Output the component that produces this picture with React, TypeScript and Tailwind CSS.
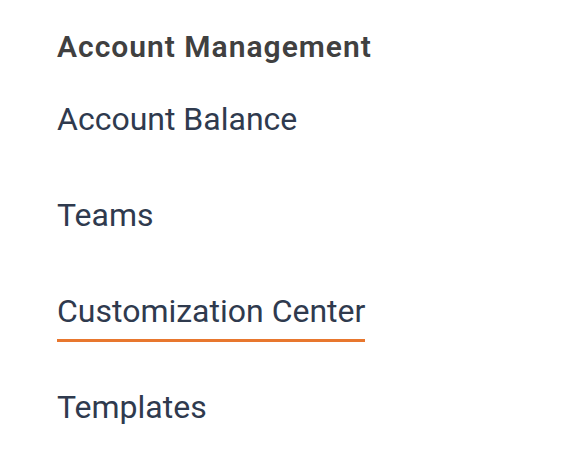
import React from "react";

export default function App() {
  const items = ["Account Balance", "Teams", "Customization Center", "Templates"];
  return (
    <div className="w-[586px] h-[454px] bg-white pl-[57px] pt-[27px] overflow-hidden" style={{ fontFamily: "Roboto, sans-serif" }}>
      <div className="text-[30px] leading-[40px] font-semibold tracking-[1px] text-[#404040]">Account Management</div>
      <div className="flex flex-col items-start gap-[56px] mt-[32px]">
        {items.map((t, i) => (
          <div key={t} className="relative h-[40px]">
            <span className="block text-[32px] leading-[40px] text-[#2f3a4e]">{t}</span>
            {i === 2 && <div className="absolute left-0 right-0 top-[48px] h-[3px] bg-[#e8772e]" />}
          </div>
        ))}
      </div>
    </div>
  );
}
